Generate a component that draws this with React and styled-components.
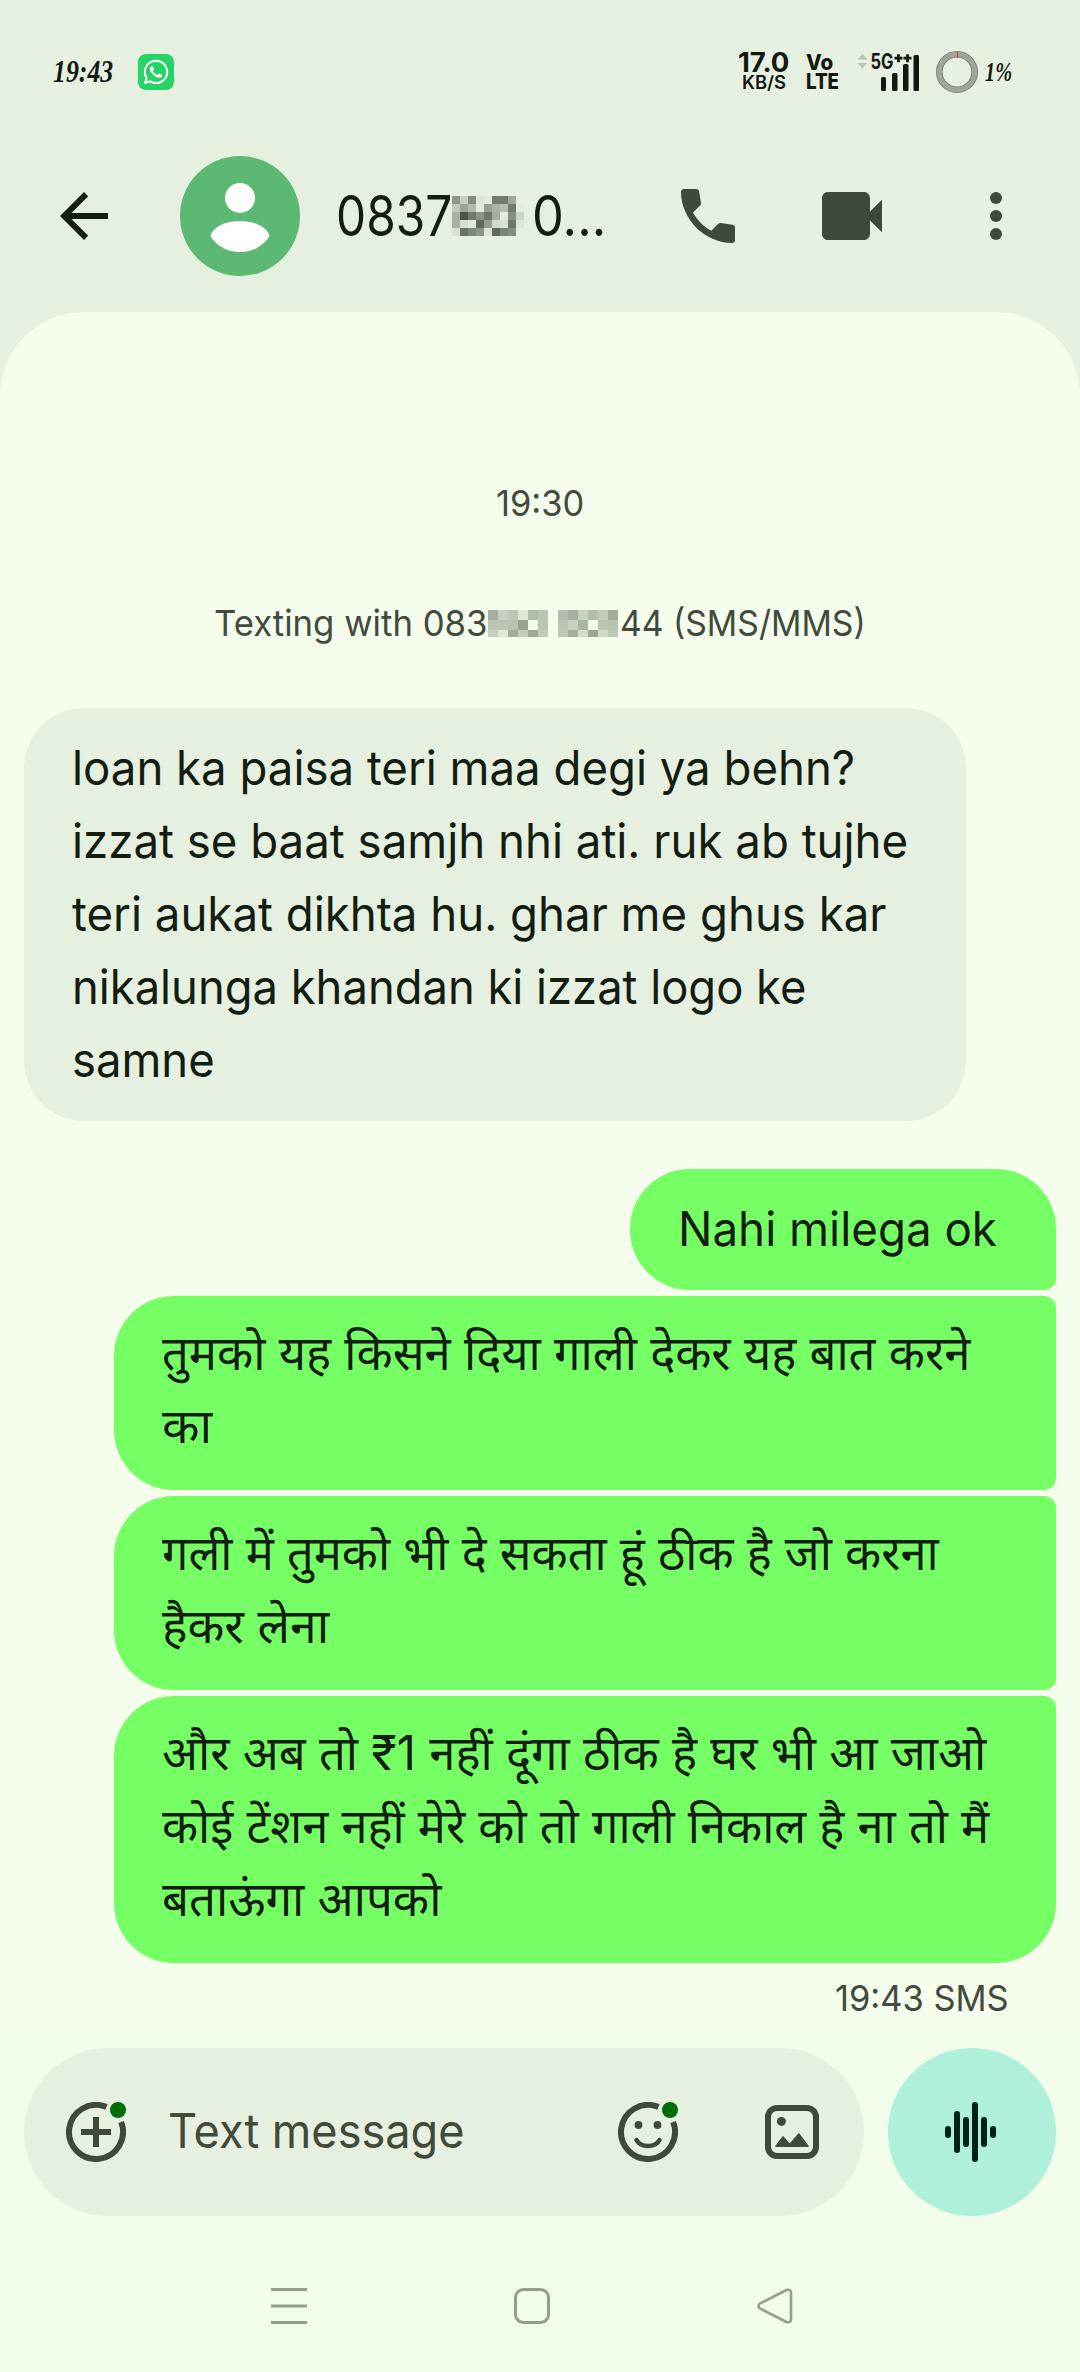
import React, { useLayoutEffect, useRef, useState } from "react"
import styled, { createGlobalStyle } from "styled-components"
import { FaWhatsapp } from "react-icons/fa"

const GlobalStyle = createGlobalStyle`
  body {
    margin: 0;
    background: #f1fcea;
  }

  * {
    box-sizing: border-box;
  }
`

const Screen = styled.div`
  display: flex;
  flex-direction: column;
  width: 1080px;
  height: 2372px;
  overflow: hidden;
  background: #e6f0e0;
  color: #131d10;
  font-family: Inter, "Noto Sans", "Noto Sans Devanagari", sans-serif;
`

const StatusBar = styled.div`
  display: flex;
  align-items: center;
  height: 144px;
  padding: 0 68px 0 53px;
  color: #131911;
`

const ItalicText = styled.div`
  font-family: "Liberation Serif", serif;
  font-style: italic;
  font-weight: bold;
  font-size: ${props => props.size}px;
  line-height: 36px;
`

const WhatsAppBadge = styled.div`
  display: flex;
  align-items: center;
  justify-content: center;
  width: 36px;
  height: 36px;
  margin-left: 25px;
  border-radius: 8px;
  background: #25d366;
  color: #fff;
`

const StatusRight = styled.div`
  display: flex;
  align-items: center;
  margin-left: auto;
`

const Stack = styled.div`
  display: flex;
  flex-direction: column;
  align-items: ${props => props.align || "center"};
  margin-right: ${props => props.gap}px;
  font-family: Inter, sans-serif;
`

const StackLine = styled.div`
  font-size: ${props => props.size}px;
  font-weight: ${props => props.weight};
  line-height: ${props => props.height}px;
`

const FlatSvg = styled.svg`
  display: block;
  flex: none;
  margin-right: ${props => props.gap}px;
`

const Toolbar = styled.div`
  display: flex;
  align-items: center;
  height: 168px;
  padding: 0 48px 24px;
`

const Icon = styled.svg`
  display: block;
  flex: none;
  width: ${props => props.size}px;
  height: ${props => props.size}px;
  margin-left: ${props => props.left || 0}px;
`

const Title = styled.div`
  display: flex;
  align-items: center;
  width: 269px;
  margin-left: 36px;
  font-size: 56px;
  line-height: 70px;
`

const Conversation = styled.div`
  display: flex;
  flex-direction: column;
  height: 1712px;
  padding: 168px 24px 0;
  border-radius: 84px 84px 0 0;
  background: #f5fdec;
`

const Notice = styled.div`
  display: flex;
  align-items: center;
  justify-content: center;
  height: 47px;
  margin-bottom: ${props => props.gap}px;
  color: #424a3e;
  font-size: 36px;
  line-height: 47px;
`

const Bubble = styled.div`
  align-self: ${props => props.sent ? "flex-end" : "flex-start"};
  width: ${props => props.width}px;
  margin-bottom: ${props => props.gap}px;
  padding: ${props => props.hindi ? "20px 48px 28px" : "23px 48px 25px"};
  border-radius: ${props => props.corners};
  background: ${props => props.sent ? "#76ff64" : "#e6f0e0"};
  font-size: 48px;
  line-height: 73px;
`

const Receipt = styled.div`
  display: flex;
  justify-content: flex-end;
  padding-right: 47px;
  color: #424a3e;
  font-size: 36px;
  line-height: 47px;
`

const Bottom = styled.div`
  display: flex;
  flex: 1;
  flex-direction: column;
  background: #f1fcea;
`

const Composer = styled.div`
  display: flex;
  justify-content: space-between;
  padding: 24px 24px 0;
`

const InputPill = styled.div`
  display: flex;
  align-items: center;
  width: 840px;
  height: 168px;
  padding: 0 45px 0 42px;
  border-radius: 84px;
  background: #e6f0e0;
`

const Placeholder = styled.div`
  flex: 1;
  margin-left: 42px;
  padding-bottom: 2px;
  color: #424a3a;
  font-size: 48px;
  line-height: 72px;
`

const VoiceButton = styled.div`
  display: flex;
  align-items: center;
  justify-content: center;
  width: 168px;
  height: 168px;
  border-radius: 50%;
  background: #aef0d9;
`

const NavBar = styled.div`
  display: flex;
  justify-content: space-between;
  padding: 72px 287px 0 271px;
`

const LineBox = styled.div`
  flex: none;
  white-space: nowrap;
`

const LineText = styled.span`
  display: inline-block;
  transform-origin: left center;
`

// Stretches a line of text so that it takes up exactly the given width.
function Line({ width, children }) {
  const ref = useRef(null)
  const [scale, setScale] = useState(1)

  useLayoutEffect(() => {
    setScale(width / ref.current.offsetWidth)
  }, [width, children])

  return (
    <LineBox style={ { width } }>
      <LineText ref={ ref } style={ { transform: `scaleX(${scale})` } }>{ children }</LineText>
    </LineBox>
  )
}

const titleMosaic = [
  "#8c958a #c5cec0 #838c80 #dbe5d6 #e2ecdd #707a6d #707a6d #a0a99c #e6f0e0",
  "#c0c9bc #9aa396 #b0b9ac #e0eadb #98a194 #a9b2a5 #b5beb0 #707a6d #e4eede",
  "#a8b1a4 #4a5447 #6f796c #8a9386 #6c7669 #a4ada0 #e2ecdd #858e82 #ccd6c8",
  "#a8b1a4 #d5dfd0 #e0eadb #5f695c #959e91 #d0dacb #d8e2d3 #6d776a #dbe5d6",
  "#d8e2d3 #6a7467 #7d877a #8c9589 #dae4d5 #5f695c #7a8477 #858f82 #e6f0e0"
]

const noticeMosaicLeft = [
  "#a5afa1 #c5cfbf #bbc5b6 #dce7d6 #afbcab #bbc5b5",
  "#bbc5b5 #bac4b4 #b8c2b2 #98a292 #f3fbea #bac5b5",
  "#c5cfbf #dfe9d7 #a2ac9d #c3cdbd #a0aa9b #c2ccbc"
]

const noticeMosaicRight = [
  "#b3bdae #a5afa0 #c8d2c2 #b0bcac #c2ccbc #a2ac9d",
  "#bbc5b5 #c8d2c2 #aab4a5 #f5fdec #bac4b4 #b8c2b2",
  "#bdc7b7 #a5afa0 #d2dccc #9ca697 #d0daca #bec8b8"
]

function Mosaic({ rows, cell, height, gap }) {
  const cells = rows.map(row => row.split(" "))
  const width = cells[0].length * cell

  return (
    <FlatSvg
      width={ width }
      height={ height }
      gap={ gap }
      viewBox={ `0 0 ${width} ${height}` }
      shapeRendering="crispEdges">
      { cells.map((row, y) => row.map((color, x) => (
        <rect key={ `${x}-${y}` } x={ x * cell } y={ y * cell } width={ cell } height={ cell } fill={ color } />
      ))) }
    </FlatSvg>
  )
}

const messages = [
  {
    width: 942,
    gap: 48,
    corners: "60px",
    lines: [
      ["loan ka paisa teri maa degi ya behn?", 783],
      ["izzat se baat samjh nhi ati. ruk ab tujhe", 836],
      ["teri aukat dikhta hu. ghar me ghus kar", 815],
      ["nikalunga khandan ki izzat logo ke", 734],
      ["samne", 143]
    ]
  },
  {
    sent: true,
    width: 426,
    gap: 6,
    corners: "60px 60px 12px 60px",
    lines: [["Nahi milega ok", 319]]
  },
  {
    sent: true,
    hindi: true,
    width: 942,
    gap: 6,
    corners: "60px 12px 12px 60px",
    lines: [["तुमको यह किसने दिया गाली देकर यह बात करने", 808], ["का", 50]]
  },
  {
    sent: true,
    hindi: true,
    width: 942,
    gap: 6,
    corners: "60px 12px 12px 60px",
    lines: [["गली में तुमको भी दे सकता हूं ठीक है जो करना", 777], ["हैकर लेना", 167]]
  },
  {
    sent: true,
    hindi: true,
    width: 942,
    gap: 12,
    corners: "60px 12px 60px 60px",
    lines: [
      ["और अब तो ₹1 नहीं दूंगा ठीक है घर भी आ जाओ", 824],
      ["कोई टेंशन नहीं मेरे को तो गाली निकाल है ना तो मैं", 827],
      ["बताऊंगा आपको", 279]
    ]
  }
]

function SignalIcon() {
  return (
    <FlatSvg width="64" height="44" gap="15" viewBox="0 -3 64 44">
      <path d="M.8 6.5 5.5 1 10.2 6.5zM.8 10 5.5 15.5 10.2 10z" fill="#b9c3b4" />
      <text
        x="13.5"
        y="16"
        fontFamily="Inter, sans-serif"
        fontSize="21"
        fontWeight="700"
        textLength="23"
        lengthAdjust="spacingAndGlyphs"
        fill="#131911">
        5G
      </text>
      <path d="M37.5 5.2h8M41.5 1.2v8M46.5 5.2h8M50.5 1.2v8" stroke="#131911" strokeWidth="2.8" />
      <rect x="24" y="24" width="5" height="14" rx="1.5" fill="#131911" />
      <rect x="35" y="20" width="5.5" height="18" rx="1.5" fill="#131911" />
      <rect x="46" y="11" width="5.5" height="27" rx="1.5" fill="#131911" />
      <rect x="56.5" y="2" width="5.5" height="36" rx="1.5" fill="#131911" />
    </FlatSvg>
  )
}

function BatteryRing() {
  return (
    <FlatSvg width="42" height="42" gap="7" viewBox="0 0 42 42">
      <circle cx="21" cy="21" r="17.7" fill="none" stroke="#737a70" strokeWidth="6.6" />
      <circle cx="21" cy="21" r="17.7" fill="none" stroke="#9ea69a" strokeWidth="5" />
      <path d="M21.5 1v6" stroke="#d8403c" strokeWidth="1.2" />
    </FlatSvg>
  )
}

function BadgedRing({ left, children }) {
  return (
    <Icon size={ 60 } left={ left } viewBox="0 0 60 60">
      <path d="M55.1 20A27 27 0 1 1 40.5 5.1" fill="none" stroke="#404a3a" strokeWidth="6" />
      { children }
      <circle cx="52" cy="8" r="8" fill="#006e08" />
    </Icon>
  )
}

export default function App() {
  return (
    <Screen>
      <GlobalStyle />
      <StatusBar>
        <ItalicText size={ 31 }><Line width={ 60 }>19:43</Line></ItalicText>
        <WhatsAppBadge><FaWhatsapp size={ 28 } /></WhatsAppBadge>
        <StatusRight>
          <Stack gap={ 17 }>
            <StackLine size={ 27 } weight={ 700 } height={ 22 }><Line width={ 51 }>17.0</Line></StackLine>
            <StackLine size={ 18 } weight={ 600 } height={ 18 }><Line width={ 44 }>KB/S</Line></StackLine>
          </Stack>
          <Stack gap={ 18 } align="flex-start">
            <StackLine size={ 22 } weight={ 800 } height={ 19 }><Line width={ 27 }>Vo</Line></StackLine>
            <StackLine size={ 21 } weight={ 800 } height={ 19 }><Line width={ 33 }>LTE</Line></StackLine>
          </Stack>
          <SignalIcon />
          <BatteryRing />
          <ItalicText size={ 27 }><Line width={ 27 }>1%</Line></ItalicText>
        </StatusRight>
      </StatusBar>
      <Toolbar>
        <Icon size={ 72 } viewBox="0 0 24 24" fill="#131d10">
          <path d="M20 11H7.83l5.59-5.59L12 4l-8 8 8 8 1.41-1.41L7.83 13H20v-2z" />
        </Icon>
        <Icon size={ 120 } left={ 60 } viewBox="0 0 120 120">
          <circle cx="60" cy="60" r="60" fill="#5bb974" />
          <circle cx="60" cy="42" r="15" fill="#fff" />
          <path
            d="M31.3 81.5Q30 79.5 31.3 77.5C36 69 48 65 60 65S84 69 88.7 77.5Q90 79.5 88.7 81.5C82 91 72 96 60 96S38 91 31.3 81.5z"
            fill="#fff" />
        </Icon>
        <Title>
          <Line width={ 116 }>0837</Line>
          <Mosaic rows={ titleMosaic } cell={ 8 } height={ 40 } gap={ 8 } />
          <Line width={ 74 }>0...</Line>
        </Title>
        <Icon size={ 72 } left={ 67 } viewBox="0 0 24 24" fill="#404a3a">
          <path d="M4 3h4.1c.5 0 .9.35.95.85l.6 3.85c.05.35-.03.6-.25.8L7 10.8c1.4 2.6 3.5 4.7 6.1 6.1l2.3-2.3c.25-.22.55-.3.85-.27l3.9.6c.5.08.85.45.85.95V20c0 .6-.4 1-1 1C11 21 3 13 3 4c0-.6.4-1 1-1z" />
        </Icon>
        <Icon size={ 72 } left={ 72 } viewBox="0 0 24 24" fill="#404a3a">
          <path d="M4 4h12c1.1 0 2 .9 2 2v4.5l4-3.9v10.8l-4-3.9V18c0 1.1-.9 2-2 2H4c-1.1 0-2-.9-2-2V6c0-1.1.9-2 2-2z" />
        </Icon>
        <Icon size={ 72 } left={ 72 } viewBox="0 0 24 24" fill="#404a3a">
          <circle cx="12" cy="6" r="2" />
          <circle cx="12" cy="12" r="2" />
          <circle cx="12" cy="18" r="2" />
        </Icon>
      </Toolbar>
      <Conversation>
        <Notice gap={ 73 }><Line width={ 88 }>19:30</Line></Notice>
        <Notice gap={ 61 }>
          <Line width={ 274 }>Texting with 083</Line>
          <Mosaic rows={ noticeMosaicLeft } cell={ 10 } height={ 27 } gap={ 10 } />
          <Mosaic rows={ noticeMosaicRight } cell={ 10 } height={ 27 } gap={ 2 } />
          <Line width={ 246 }>44 (SMS/MMS)</Line>
        </Notice>
        { messages.map(({ lines, ...bubble }) => (
          <Bubble key={ lines[0][0] } { ...bubble }>
            { lines.map(([text, width]) => <Line key={ text } width={ width }>{ text }</Line>) }
          </Bubble>
        )) }
        <Receipt><Line width={ 174 }>19:43 SMS</Line></Receipt>
      </Conversation>
      <Bottom>
        <Composer>
          <InputPill>
            <BadgedRing>
              <path d="M30 15v30M15 30h30" stroke="#404a3a" strokeWidth="6" />
            </BadgedRing>
            <Placeholder><Line width={ 297 }>Text message</Line></Placeholder>
            <BadgedRing>
              <circle cx="20.5" cy="23" r="3.9" fill="#404a3a" />
              <circle cx="39.5" cy="23" r="3.9" fill="#404a3a" />
              <path
                d="M18.5 38C22.5 46 37.5 46 41.5 38"
                fill="none"
                stroke="#404a3a"
                strokeWidth="4.5"
                strokeLinecap="round" />
            </BadgedRing>
            <Icon size={ 54 } left={ 87 } viewBox="0 0 54 54">
              <rect x="3" y="3" width="48" height="48" rx="9" fill="none" stroke="#404a3a" strokeWidth="6" />
              <circle cx="16.4" cy="16.4" r="4.5" fill="#404a3a" />
              <path
                d="M11 41.2 18.1 32 24.6 39.8 33.8 29 43 41.2z"
                fill="#404a3a"
                stroke="#404a3a"
                strokeWidth="1.6"
                strokeLinejoin="round" />
            </Icon>
          </InputPill>
          <VoiceButton>
            <Icon size={ 72 } viewBox="0 0 24 24">
              <path
                d="M4 11v2M7 6v12M10 8v8M13 3v18M16 8v8M19 11v2"
                stroke="#002117"
                strokeWidth="2"
                strokeLinecap="round" />
            </Icon>
          </VoiceButton>
        </Composer>
        <NavBar>
          <Icon size={ 36 } viewBox="0 0 36 36">
            <path d="M0 1.5h36M0 18h36M0 34.5h36" stroke="#949e91" strokeWidth="3" />
          </Icon>
          <Icon size={ 36 } viewBox="0 0 36 36">
            <rect x="1.5" y="1.5" width="33" height="33" rx="8" fill="none" stroke="#949e91" strokeWidth="3" />
          </Icon>
          <Icon size={ 36 } viewBox="0 0 36 36">
            <path
              d="M2.7 15.6 29.5 2Q33.8.8 34 4.5V31.5Q33.8 35.2 29.5 34L2.7 20.4Q.2 18 2.7 15.6z"
              fill="none"
              stroke="#949e91"
              strokeWidth="2.6"
              strokeLinejoin="round" />
          </Icon>
        </NavBar>
      </Bottom>
    </Screen>
  )
}
